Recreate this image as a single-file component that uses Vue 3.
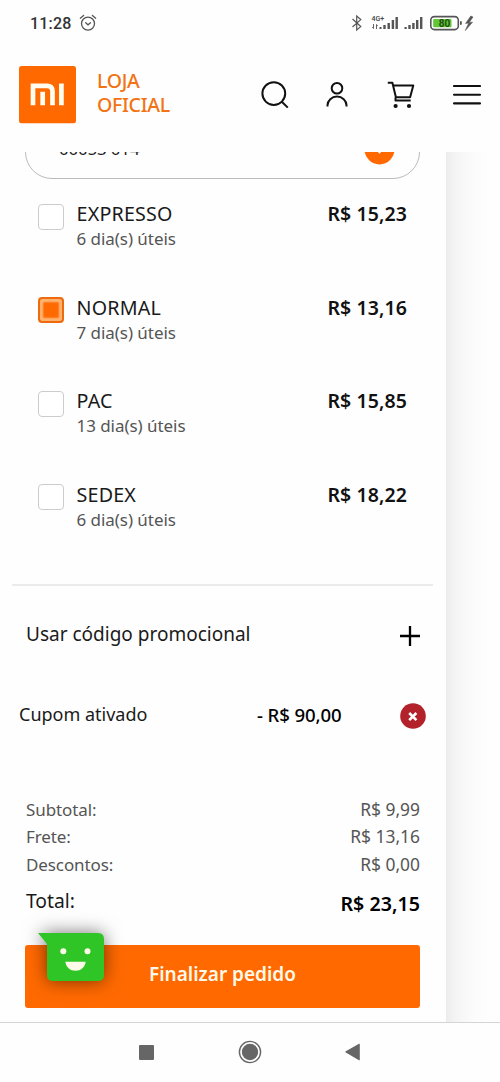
<script setup>
const options = [
  { name: 'EXPRESSO', days: '6 dia(s) úteis', price: 'R$ 15,23', checked: false },
  { name: 'NORMAL', days: '7 dia(s) úteis', price: 'R$ 13,16', checked: true },
  { name: 'PAC', days: '13 dia(s) úteis', price: 'R$ 15,85', checked: false },
  { name: 'SEDEX', days: '6 dia(s) úteis', price: 'R$ 18,22', checked: false },
]
const summary = [
  { label: 'Subtotal:', value: 'R$ 9,99' },
  { label: 'Frete:', value: 'R$ 13,16' },
  { label: 'Descontos:', value: 'R$ 0,00' },
]
</script>

<template>
  <div class="screen">
    <div class="status">
      <span class="clock">11:28</span>
      <svg class="alarm" width="18" height="18" viewBox="0 0 18 18" fill="none" stroke="#555" stroke-width="1.3" stroke-linecap="round">
        <circle cx="9" cy="9.6" r="6.5" />
        <path d="M1.3 4.2 4.6 1.4M13.4 1.4l3.3 2.8M6.7 8.8 9 10.8l2.5-2" />
      </svg>
      <svg class="status-icons" width="124" height="18" viewBox="0 0 124 18">
        <path d="M1.5 5 9.8 12.6 5.7 16V2l4.1 3.6L1.5 13" fill="none" stroke="#555" stroke-width="1.2" />
        <g fill="#555">
          <path d="M28.5 15v-2h2v2zM32.3 15v-4h2.4v4zM36.5 15V9h2.4v6zM40.7 15V6h2.4v9zM44.5 15V3h2.4v12z" />
          <path d="M53.5 15v-2h2.2v2zM57.3 15v-4h2.4v4zM61.2 15V9h2.4v6zM65 15V6h2.4v9zM69 15V3h2.4v12z" />
          <rect x="109" y="7" width="1.8" height="4" rx=".9" />
          <path d="m119.8 2-5.2 7.4 3.2-.3-3.5 7.4 7.2-8.3-3.3.2L122 3z" stroke="#555" stroke-width=".6" />
        </g>
        <path d="M22.5 10v4.5m-1.2-1.5 1.2 1.5M25.5 15v-4.5m1.2 1.5-1.2-1.5" stroke="#555" stroke-width=".9" fill="none" />
        <text x="20.5" y="6.8" class="net">4G+</text>
        <rect x="79.8" y="2.6" width="27.5" height="13" rx="3.6" fill="#fff" stroke="#555" stroke-width="1.6" />
        <rect x="82.2" y="5" width="18.3" height="8.3" rx="1" fill="#5ec832" />
        <text x="93.5" y="12.8" class="level">80</text>
      </svg>
    </div>

    <header class="header">
      <svg class="logo" width="57" height="58" viewBox="0 0 57 58">
        <rect width="57" height="57.3" rx="2.5" fill="#ff6900" />
        <g fill="none" stroke="#fffdf0" stroke-width="4.7">
          <path d="M14 39.3V19.8H28q5.5 0 5.5 5.5v14M23.7 25.8V39.3M42.4 17.5v21.8" />
        </g>
      </svg>
      <div class="brand"><div>LOJA</div><div>OFICIAL</div></div>
      <nav class="tools">
        <svg width="28" height="28" viewBox="0 0 28 28" fill="none" stroke="#111" stroke-width="2">
          <circle cx="12.8" cy="12.6" r="11.4" /><path d="m20.8 20.8 6 5.8" />
        </svg>
        <svg class="user" width="22" height="28" viewBox="0 0 22 28" fill="none" stroke="#111" stroke-width="2">
          <circle cx="11" cy="7.2" r="5.3" /><path d="M1.5 25.5v-1.2a9.5 8.7 0 0 1 19 0v1.2" />
        </svg>
        <svg width="28" height="28" viewBox="0 0 28 28" fill="none" stroke="#111" stroke-width="2">
          <path d="M.8 1.7h4.6l3.5 14.5h14.2l3.2-11.7H6.2M8.5 16.5v3h15.2" stroke-linejoin="round" />
          <circle cx="8.6" cy="25" r="2.1" fill="#111" stroke="none" />
          <circle cx="22" cy="25" r="2.1" fill="#111" stroke="none" />
        </svg>
        <svg width="28" height="28" viewBox="0 0 28 28" stroke="#111" stroke-width="2.1" stroke-linecap="round">
          <path d="M1 5h26M1 13.7h26M1 22.4h26" />
        </svg>
      </nav>
    </header>

    <main class="page">
      <section class="card">
        <div class="zip">
          <span class="code">00053 014</span>
          <svg width="31" height="31" viewBox="0 0 31 31">
            <circle cx="15.5" cy="15.5" r="15" fill="#ff6900" />
            <path d="M15.5 8v10M11 14l4.5 4.5L20 14" stroke="#fff" stroke-width="1.6" fill="none" />
          </svg>
        </div>

        <ul class="options">
          <li v-for="o in options" :key="o.name" class="option">
            <span class="box" :class="{ checked: o.checked }"></span>
            <div class="info">
              <div class="name">{{ o.name }}</div>
              <div class="days">{{ o.days }}</div>
            </div>
            <div class="price">{{ o.price }}</div>
          </li>
        </ul>

        <hr class="rule" />

        <div class="promo">
          <span>Usar código promocional</span>
          <svg width="20" height="20" viewBox="0 0 20 20"><path d="M0 10h20M10 0v20" stroke="#000" stroke-width="2.3" /></svg>
        </div>

        <div class="coupon">
          <span class="coupon-label">Cupom ativado</span>
          <span class="coupon-value">- R$ 90,00</span>
          <svg width="26" height="26" viewBox="0 0 26 26">
            <circle cx="13" cy="13" r="12.8" fill="#b3222a" />
            <path d="m9.2 10 7.2 7.2m0-7.2-7.2 7.2" stroke="#fff" stroke-width="2.6" />
          </svg>
        </div>

        <div class="summary">
          <div v-for="s in summary" :key="s.label" class="line">
            <span>{{ s.label }}</span><span class="amount">{{ s.value }}</span>
          </div>
        </div>
        <div class="total">
          <span>Total:</span><span class="total-value">R$ 23,15</span>
        </div>

        <div class="cta">
          <button class="submit">Finalizar pedido</button>
          <svg class="chat" width="66" height="48" viewBox="0 0 66 48">
            <path d="M0 0h60q6 0 6 6v36q0 6-6 6H15q-6 0-6-6V11z" fill="#2fc526" />
            <circle cx="25.3" cy="18.3" r="3" fill="#fffbe8" />
            <circle cx="49.5" cy="18.3" r="3" fill="#fffbe8" />
            <path d="M27.3 28.7h20.4c-.8 5.6-4.8 9-10.2 9s-9.4-3.4-10.2-9z" fill="#fffbe8" />
          </svg>
        </div>
      </section>
      <div class="edge"></div>
    </main>

    <footer class="navbar">
      <svg width="15" height="15"><rect width="15" height="15" rx="1" fill="#666" /></svg>
      <svg width="24" height="24" viewBox="0 0 24 24">
        <circle cx="12" cy="12" r="10.6" fill="none" stroke="#666" stroke-width="1.4" /><circle cx="12" cy="12" r="8.2" fill="#666" />
      </svg>
      <svg width="15" height="18" viewBox="0 0 15 18"><path d="M.8 8.2 14 .8q.8-.3.8.5v15.4q0 .8-.8.5L.8 9.6q-.9-.7 0-1.4z" fill="#666" /></svg>
    </footer>
  </div>
</template>

<style>
body { margin: 0; background: #fefefe; }
</style>

<style scoped>
.screen { width: 500px; height: 1082px; display: flex; flex-direction: column; overflow: hidden; background: #fefefe; color: #1a1a1a; font-family: "Noto Sans", "Open Sans", sans-serif; }
.status { height: 46px; box-sizing: border-box; display: flex; align-items: center; padding: 0 25px 0 30px; }
.clock { font: 500 16px/20px Roboto, sans-serif; letter-spacing: .2px; color: #333; width: 49px; padding-top: 1px; }
.status-icons { margin-left: auto; }
.net { font: 500 7px Roboto, sans-serif; fill: #444; }
.level { font: 700 10px Roboto, sans-serif; fill: #274d18; text-anchor: middle; }
.header { height: 106px; box-sizing: border-box; display: flex; align-items: flex-start; padding: 19.7px 19px 0; }
.brand { margin: 3px 0 0 21px; font-size: 19.5px; line-height: 24.5px; letter-spacing: -.3px; color: #f27313; font-weight: 500; }
.tools { margin: 15px 0 0 auto; display: flex; width: 220px; justify-content: space-between; }
.user { margin: 0 1px 0 -1px; }
.page { height: 870px; display: flex; overflow: hidden; }
.card { width: 446px; box-sizing: border-box; display: flex; flex-direction: column; flex-shrink: 0; }
.edge { flex: 1; background: linear-gradient(90deg, #ececec 0, #f3f3f3 8px, #f8f8f8 18px, #fcfcfc 30px, #fefefe 44px); }
.zip { box-sizing: border-box; width: 395px; height: 54px; margin: -27px 0 0 25px; border: 1px solid #bbb; border-radius: 27px; display: flex; justify-content: space-between; align-items: center; padding: 0 24px 5px 33px; font-size: 17px; letter-spacing: -.2px; flex-shrink: 0; }
.code { margin-bottom: 3px; }
.options { list-style: none; margin: 22px 0 0; padding: 0; }
.option { height: 93.5px; display: flex; align-items: flex-start; padding: 0 39px 0 38px; }
.box { box-sizing: border-box; width: 26px; height: 26px; margin-top: 2.5px; border: 1px solid #ccc; border-radius: 4px; background: #fff; }
.box.checked { border: 2px solid #ed6b0c; background: #ff6900; box-shadow: inset 0 0 0 2px #ffb26d, inset 0 0 2px 3px #ffbd80; }
.info { margin-left: 12.5px; }
.name { font-size: 19.7px; line-height: 26px; letter-spacing: .2px; }
.days { font-size: 17px; line-height: 24.5px; color: #555; letter-spacing: -.05px; }
.price { margin-left: auto; font-size: 19.5px; line-height: 26px; letter-spacing: .1px; font-weight: 600; color: #111; }
.rule { width: 421px; height: 2px; margin: 9px 0 0 12px; border: 0; background: #ebebeb; }
.promo { margin: 34px 26px 0; height: 30px; display: flex; justify-content: space-between; font-size: 19px; line-height: 28px; }
.promo svg { margin-top: 6px; }
.coupon { margin: 50px 20px 0 19px; height: 30px; display: flex; font-size: 18px; line-height: 29px; }
.coupon-label { width: 238px; }
.coupon-value { font-weight: 500; color: #000; font-size: 18.6px; letter-spacing: -.1px; }
.coupon svg { margin: 2.5px 0 0 auto; }
.summary { margin: 65.5px 26px 0; }
.line { display: flex; justify-content: space-between; height: 27.5px; line-height: 27.5px; font-size: 17px; letter-spacing: -.1px; color: #555; }
.amount { font-size: 17.4px; letter-spacing: 0; }
.total { margin: 8.5px 26px 0; display: flex; justify-content: space-between; height: 30px; line-height: 28px; font-size: 19.3px; }
.total-value { padding-top: 3px; font-size: 19.6px; letter-spacing: .05px; font-weight: 600; color: #000; }
.cta { position: relative; margin: 28px 0 0 25px; width: 395px; }
.submit { display: block; width: 395px; height: 63px; border: 0; border-radius: 3px; background: #ff6900; color: #fff9ea; font: 600 19px/58px "Noto Sans", sans-serif; padding: 0 0 5px; }
.chat { position: absolute; left: 13px; top: -12px; filter: drop-shadow(0 0 9px rgba(0, 0, 0, .55)); overflow: visible; }
.navbar { box-sizing: border-box; height: 60px; border-top: 1.5px solid #d4d4d4; display: flex; justify-content: space-between; align-items: center; padding: 0 140px 1px 139px; }
</style>
